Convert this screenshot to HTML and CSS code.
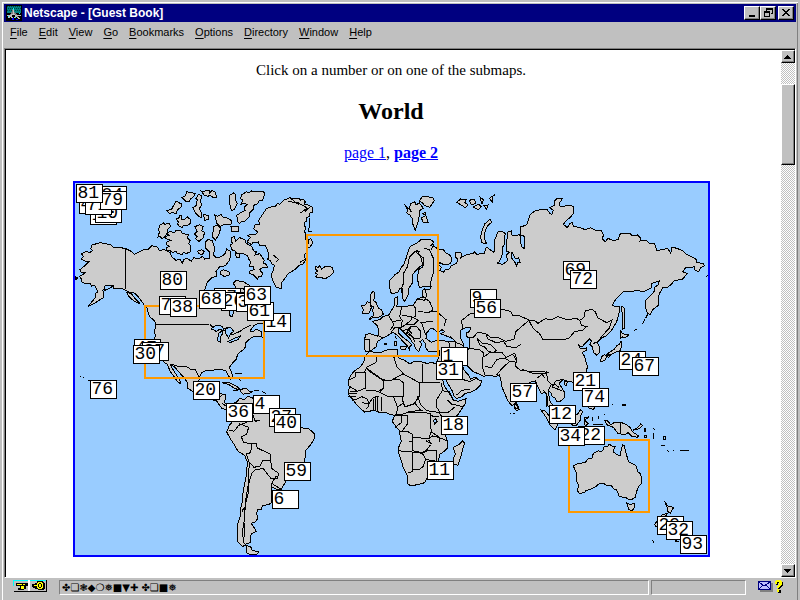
FILE: index.html
```html
<!DOCTYPE html>
<html lang="en">
<head>
  <meta charset="UTF-8">
  <title>Netscape - [Guest Book]</title>
  <link rel="stylesheet" href="styles.css">
</head>
<body>

  <header class="titlebar">
    <svg class="logo" viewBox="0 0 16 16" shape-rendering="crispEdges">
      <path fill="#000" d="M0 0h16v16H0z"/>
      <path fill="#008080" d="M1 1h14v7H1z"/>
      <path fill="none" stroke="#004040" stroke-dasharray="1 1" d="M1 1.500h14M2 3.500h13M1 5.500h14"/>
      <path fill="none" stroke="#808080" stroke-width="2" d="M7 4v3L3 12M7 7l5 5"/>
      <path fill="none" stroke="#c0c0c0" d="M7.500 4v5M1 10l3 1 3-2 4 2 4-1M2 13l3-2 2 3 3-3 4 3"/>
      <path fill="#00ffff" d="M7 3h1v2H7zM2 11h1v1H2zM13 8h1v1h-1zM9 12h1v1H9z"/>
      <path fill="#0000ff" d="M6 13h2v2H6zM10 14h2v1h-2z"/>
    </svg>
    <h1>Netscape - [Guest Book]</h1>
    <div class="window-buttons">
      <button type="button" aria-label="Minimize"><svg viewBox="0 0 12 10"><path d="M3 7h6v2H3z"/></svg></button>
      <button type="button" aria-label="Restore"><svg viewBox="0 0 12 10"><path d="M4 0h7v6H9V5h1V2H5v1H4zM2 3h6v6H2zM3 5v3h4V5z" fill-rule="evenodd"/></svg></button>
      <button type="button" aria-label="Close"><svg viewBox="0 0 12 10"><path d="M2 1h2v1h1v1h2V2h1V1h2v1H9v1H8v1H7v1h1v1h1v1h1v1H8V7H7V6H5v1H4v1H2V7h1V6h1V5h1V4H4V3H3V2H2z"/></svg></button>
    </div>
  </header>

  <nav class="menubar">
    <button type="button"><u>F</u>ile</button>
    <button type="button"><u>E</u>dit</button>
    <button type="button"><u>V</u>iew</button>
    <button type="button"><u>G</u>o</button>
    <button type="button"><u>B</u>ookmarks</button>
    <button type="button"><u>O</u>ptions</button>
    <button type="button"><u>D</u>irectory</button>
    <button type="button"><u>W</u>indow</button>
    <button type="button"><u>H</u>elp</button>
  </nav>

  <div class="viewport">
    <main class="page">
      <p>Click on a number or on one of the submaps.</p>
      <h2>World</h2>
      <p class="pages"><a href="#page1">page 1</a>, <a href="#page2"><b>page 2</b></a></p>

      <div class="map" id="map">
        <svg class="land" viewBox="0 0 1899 1116">
          <!-- North America -->
          <g transform="translate(-15 -24)">
            <path d="M165 220 150 218 130 216 120 208 104 206 92 203 80 206 66 210 62 222 68 226 60 232 48 230 34 236 40 244 34 252 44 258 60 258 48 268 40 276 30 284 34 292 46 292 40 298 28 304 34 312 36 322 48 326 62 324 64 334 74 330 80 342 84 350 76 356 78 366 66 380 54 394 72 386 90 374 100 368 102 354 98 346 108 334 118 330 130 332 130 340 146 340 158 342 168 346 180 352 190 352 200 360 208 370 216 380 222 390 232 400 234 412 240 426 254 438 258 450 254 468 256 484 250 500 254 520 260 534 270 548 280 560 292 568 300 588 312 604 322 620 332 626 328 612 318 598 308 582 302 570 312 574 326 590 340 606 352 622 354 640 376 654 400 664 420 672 440 678 448 690 456 700 468 704 472 692 464 682 468 660 452 656 438 662 432 656 436 640 424 640 412 644 394 640 386 620 390 604 394 594 410 586 422 588 440 582 456 584 468 588 474 600 482 612 488 606 484 590 478 578 486 566 500 552 502 538 520 524 528 514 526 504 536 494 552 484 576 486 574 470 558 462 550 470 540 468 552 452 564 446 580 444 592 436 600 420 590 398 580 380 560 352 530 344 510 340 496 346 500 370 488 390 492 410 486 426 478 420 480 404 468 396 450 392 430 382 412 362 404 344 412 322 426 308 440 304 438 290 448 276 466 272 478 256 482 240 480 228 470 222 464 238 450 246 436 246 430 240 434 220 426 196 414 194 406 202 408 220 420 232 418 250 404 252 398 244 386 252 372 248 364 258 350 250 340 254 338 266 330 252 318 256 306 246 300 232 282 224 268 226 262 216 246 212 236 222 220 224 210 230 194 238 182 228z"/>
            <path d="M290 175l10-6 14 4 4-8 14 2 4 8 20 4-4 10 8 8-4 10 6 4-2 20-10 4-10-2-4 6-14-4-4-6-10 4-8-6-10 0-2-10 10-2-10-8 4-8 12-2-16-6-2-6 10-4zM270 150l10-6 4 4 12-4 6 10-8 8-2 12-8 12-8 4-6-6-6 2 4-14-2-10zM318 132l10-4 2-8 4 2 0 10 8 2 10-8 10 8-2 12-10 6-10-2-2 8-10-4-6-8 4-4zM375 155l14-6 10 6-4 12 8 4-2 16-14 12-10-8 4-6-8-8 8-8zM430 155l12-4 10 8-6 22-10 14-8-8zM483 155h22v14h-20zM434 120l8 4 12-6 4 8 16 4 12 8-4 12-20-2-12 6-10-10zM480 60l10-6 8 6-2 14 6 12-8 16-10 6-2-14-4-8zM290 106l14-2 14-26 18 10-4 10-10 6-4 12-12-4-8 4zM336 68l10-6 4-12 10 2 16 4-6 10-8 6-4 8-12-2zM368 98l10-6 4-18-4-4 8-12 8 4-2 20 4 8-8 10 8 16-2 12-10-6-8-8zM394 48l8 2 8-4 10 0-2 10 8-10 10 6 4 14-10 2-10-8-6 4-12-4zM400 118l14 4 0 12-10 2zM383 228l12-4 8 6-6 8-12-2zM452 288l8-4 20 8-4 10-14 2-10-6zM490 325l8-8 20 2 20 12 0 8h-40zM497 236h12v12h-10z"/>
            <path d="M485 188l8-4 4 14 12-10 16 6 2 10 18 10 6 14 8 2-4 10 14-4 14 20-4 8 10 4 4 10-16 0-8 6 8 10-2 10-8 0-4 8-12-12-12-4 0-8 14-4-4-10-10 0 2-14-6-10-2-8-14-6-18 0-6-8-10-4-4-14 6-4-4-14zM515 60l14-10 6 4 10-6 14 2 8-2 18 4-4 14-4 10-10 2-4 8-14 6 0 12-10 10-2 12-12 12-10 0-6 8-8-8 2-6-4-10 12-8 14-8-2-10 8-8-12-4-6 4 6-12-8-6z"/>
            <path d="M457 623l18-2 24 12 14 12-18-4-18-12zM510 648l10-8 12 2 4 6 10 2-10 6-10-2-6 4zM495 596l20-1M507 605l4 14M490 645h14M552 647h14M575 650l8 2 6 6"/>
            <path class="line" d="M165 220v122M258 448h158M420 448l10 10 24 4 20-4 12 22 26-12 10-8 22-10M302 567l25 8 20-2 18 12 10-2 12 22 5 8M445 668l10-6"/>
            <path class="lake" d="M423 462l16-12 18 4 6 12-16-2-8 6-8-6zM445 476l10-8 4 6-8 12v16l-8-4zM466 460l16-2 10 12-10 4-6 16-8-14zM474 500l20-10 18-8-8 12-22 8zM102 334l8-4 18 4-14 8-10 4z"/>
            <path d="M15 305l8 4-6 5zM170 352l14 4 12 16 14 14-18-8-14-12z"/>
            <path class="line" d="M30 603h4M38 606h4M55 616h6"/>
          </g>

          <!-- Greenland, Iceland, British Isles, Svalbard -->
          <g transform="translate(555 -24)">
            <path d="M20 100l12-4 14-2 6-8 8 2 10-12 20-8 6 4 20-3 6 6 8-2 6 8-4 6 10 2 16 8-2 16-6 0-2 12-10 2 2 12-8 4 0 10 6 4-4 12 4 14-2 10 15 14-4 8-8 4 4 12-8 6-2 10 6 6-10 14-12 4-12 12-22 14-6 10-12 16 0 18-16-4-10-20-6-16 8-18 2-12-8-4-4-10-8-4 4-10-4-18-8-14-16 0-4-10-16 2-4 6-14-8 10-14-8-6 16-4 8 2 6-8-12-10 4-12 14-2-4-10z"/>
            <path class="line" d="M85 78l22 6M95 72l22 18M112 82l28 16M140 100l-18 14M150 96l-16 14M40 240l16 14M48 262l8-10M120 262l20-12M138 230v24M150 130l-4 40M146 170h10"/>
            <path d="M165 274l10 4 4-6 6 10 12-8 12 0 8 4 4 14-10 10-16 10-10-4-18-2 6-8-8-4 8-6-8-6zM330 360l8-10 6 2 0 16-4 8 8 6 8 18 8 4 6 14-12 8-20 2-10 6 6-10 8-2-4-14 2-12-10-8zM304 392l12-2 6-10 8 4 4 14-6 16-22 2 4-12zM434 88l10 18-4 8 10 6 6 10 2 16 8 20 8-24 4-22 2-14 10-6-12-16-10 6-4-10-12 6-4 14 6 10zM478 78l10-14 30 3 5 10-14 20-16-6-6-8zM488 116l8-4 2 10zM484 128l14-6 6 20-14 2z"/>
            <path d="M590 82l12-10 16 2-4 8 10 8-8 8-12-8zM628 76l14-4 6 12-14 6zM640 96l16-8 8 8-10 8zM660 66l10 8-4 14zM672 92l12-2-4 14zM688 70l18-12-10 8 0 14z"/>
            <path d="M145 195l8-4 6 12-8 12-8 4z"/>
          </g>

          <!-- Europe and Asia -->
          <g transform="translate(1065 -24)">
            <path d="M-119 352-122 318-110 305-106 300-92 290-86 276-78 268-70 245-66 230-60 215-40 205-28 195-12 194 0 193 10 200 8 208 2 212 16 216 22 222 40 224 48 234 62 242 66 256 60 266 48 270 34 266 30 262 26 268 34 278 30 286 40 292 46 284 58 282 64 272 80 264 84 252 76 246 76 234 92 232 96 242 90 250 100 244 112 238 130 236 134 230 140 238 164 235 166 220 172 218 180 224 192 232 194 222 192 200 196 190 204 170 216 168 226 176 222 190 224 206 218 216 218 232 214 246 206 262 202 264 218 268 232 258 230 240 238 232 228 228 230 200 234 170 244 168 246 180 262 182 268 178 272 186 270 200 276 216 284 222 282 200 284 184 270 180 270 155 286 152 292 146 300 120 314 108 330 104 352 104 360 116 366 118 370 106 360 98 372 92 372 80 382 70 398 70 390 82 388 92 398 96 414 90 430 94 430 116 420 128 410 136 400 148 412 158 420 146 426 142 430 154 450 158 466 164 482 158 496 166 514 166 520 178 518 192 526 200 534 190 548 196 566 194 568 178 582 174 600 174 606 182 622 180 632 190 630 198 648 196 660 206 674 206 680 226 700 224 712 220 718 228 722 236 726 216 740 220 756 226 770 238 786 246 800 254 800 262 820 266 824 272 812 278 806 290 792 284 794 274 782 278 768 276 758 290 772 296 758 312 732 318 722 330 714 336 700 336 688 356 684 372 684 392 668 404 660 420 652 414 646 396 648 374 662 362 672 350 672 338 684 330 688 318 676 322 664 326 664 338 650 346 640 350 622 346 600 350 582 348 564 366 552 380 546 392 558 394 570 394 568 412 560 440 546 464 530 482 516 488 502 502 508 516 508 534 500 540 490 532 488 516 480 508 484 498 478 492 470 500 456 516 446 510 450 520 462 522 470 518 470 526 456 532 464 544 468 562 472 574 470 588 460 600 450 612 430 622 412 618 400 614 392 620 388 626 396 640 404 652 404 668 392 678 380 680 376 670 366 664 362 652 356 650 358 676 368 690 378 708 384 722 374 720 362 704 352 690 354 670 346 652 334 656 326 640 316 618 304 620 292 628 284 640 270 652 262 664 258 684 246 692 234 678 226 660 216 636 212 612 208 600 196 606 182 600 160 604 144 596 130 590 118 578 104 566 98 560 96 570 102 584 108 592 116 600 122 612 138 606 144 614 156 618 150 632 140 642 120 652 104 656 94 666 80 670 72 664 68 650 56 630 46 612 38 594 30 578 22 560 28 540 30 526 14 530-4 530-12 520-14 506-22 494-30 500-24 508-30 518-34 530-44 520-46 510-54 500-60 490-74 476-90 460-96 462-94 474-80 488-64 500-54 510-60 514-62 524-68 512-84 496-98 480-112 472-124 480-140 488-158 500-162 516-178 528-192 530-198 518-194 478-180 476-156 484-154 468-158 452-172 440-164 436-150 434-140 424-124 420-114 404-108 394-106 370-98 365-96 382-100 394-84 396-50 390-38 372-22 366-24 352-20 344 0 342 4 334-14 334-32 338-38 310-34 284-22 276-20 270-30 274-40 284-54 300-54 326-64 340-66 360-76 380-84 366-82 340-90 340-96 352-112 356z"/>
            <path class="line" d="M-82 366l-4-26 8-18-2-26 12-20 6-30 16-16 16-2M-22 270l-6-24-14-16M-40 225l8 14 12 10 2 22M-18 220l16 4 14 30-2 40-6 20-4 22M12 206l-8 18M-38 372l22 4 6-14-6-22M-50 390l8 12-2 22-14 6M-25 362l24 18 10 24-12 8-34-2M-85 395l-6 30 8 12-4 22M-85 420l30 6 20 10-12 12-24 0-20 12M0 410l20 0 28 24-6 20M-30 442l38-2M-118 430l10 20-12 16M-115 470l10-14 16 2M-25 445l8 24 8 18M-58 455l18 0 12 14-2 20-20 0-14-16zM-75 450l20-16M-85 470l16-8 16 14M-195 492l12 0 0 34M-52 486l8 16M-125 420l12 20 30-6M-160 480l20 10M-60 455l-10 20 20 12M12 495l20 2 24 2 4 24M60 485l18 18 22 8M75 498l4 22 6 10"/>
            <path class="line" d="M100 465l-6-28 28-22 20 4 20-14 28 0 14-6 20 6 18 4 8 14 14-2 34 14-14 12-26 22-6 24-24 6-24-12-22 0-14-10-24-6-14 16-16 2M300 435l14 2 10 8 22-14 18 4 20-10 30 10 24-6 12 8 4 14 16 4-14 12-22 2-18 22-34 4-44-2-10-18-18-14-12-22M452 435l10-8 4-20 20-4 10 8 8 18 26 14 16-8-8 24-22 24-12 18-14 4M142 490l14 14 24 4 20 18-12 8-14-6-10-12-14-6-8-18M168 478l6 14 22 10 26-2 8 14 28 4 14-10M118 520l30 4 14 10-4 16-2 24 10 28M162 545l20-14 34 2 12 14 26-12 6 16-4 22 14 12 28 4 38 0 20 4M165 575l20 2 16-24 22-4 14 8M200 600l16-20 24-22 20 4M275 582l30 12 42 0M85 530l20 36M350 588l2 28 12 12 12 0 12 10M362 630l-8 20M320 610l16-12 10 12M260 560l-10-20M70 608l30 6 20 6 18-10M80 660l16-14 24-4"/>
            <path class="lake" d="M-12 490l2-16 10-12 8-2 10 8 12 0 6-4 8 6-12 6 20 8 18 8 6 8-24 0-14-4-24 2-10 4zM92 466l14-8 16 0-4 12-10 4 4 14 6 0 2 14-4 22-14 2-2-20-8-16zM246 232l10 20 10-4 4 14-8 0-2 14-6-16-10-12z"/>
            <path d="M180 133l-16 14-10 26-2 16 4 14 14 4-6-14 0-20 8-20 14-12zM575 394l6 4 4 6-2 56-6 4 0-40zM572 468l6 8 18 4-10 8-8-2-8 6 0-12zM573 497l2 14-4 16-14 4-10 6-16 2 8-8 14-8 8-12 6-2zM514 545l10-6 6 6-6 12-12 2zM543 538l-12 4 4 6zM255 683l8 8 4 12-8 4-6-8z"/>
            <path class="line" d="M655 415l-8 14M645 432l-8 16M622 462l-10 4M598 476l-8 4M828 305l8-4M240 714h4M250 714h4"/>
          </g>

          <!-- Mediterranean islands -->
          <g transform="translate(555 -24)">
            <path d="M402 498h8v14h-8zM420 516l20-2-4 10-14-2zM372 505h6v4h-6zM405 484l4 8"/>
          </g>

          <!-- Africa -->
          <g transform="translate(765 471)">
            <path d="M105 48 116 38 118 32 134 38 152 38 170 30 186 28 204 30 202 42 206 54 222 60 240 72 252 64 268 64 290 70 306 68 324 72 326 90 336 112 342 136 352 152 362 166 370 180 384 184 408 176 406 190 396 206 382 226 366 240 350 252 340 262 340 276 348 290 352 304 352 324 340 336 328 344 326 364 312 380 298 396 292 412 284 428 270 432 252 436 240 436 232 430 232 406 220 384 214 362 206 340 204 326 214 304 210 286 208 272 198 260 188 246 190 232 198 226 180 224 164 216 150 218 132 210 118 214 104 216 92 206 78 192 68 178 54 162 58 142 54 124 62 106 74 92 92 80 102 64z"/>
            <path class="line" d="M105 50l35 0-2 18-28 14-6 14-28 0M76 96l0 14-22 12M110 85l48 34 22 4 40-22-20-22-8-26 8-8M105 95v50l-20 8-26 0M60 140l20 12M108 150l38 4 16-12-2-20-50-34M162 122l46-4 14 12-2 38-50 0-20-10 12-16M220 102l48 26v40l-16 24-26 8-8-18 4-50M277 72v56h52M268 128h58M262 168l10 26 18 18 40 6 26-2M335 130l2 22-18 28 0 20 12 18M337 152l22 4 10 20M352 180l12 12 34 8M356 216l20-16M205 200l14-10 6 10 30-10 18 22M190 170l14 34-6 18 22 0 14-6 44-6M75 180l20-10 18 8 4 20-10 10M55 168h24M58 160l22 0M96 188l20 4 14-20 18-4M130 176v34M135 172v38M142 170v42M155 172l-2 44M196 226l18 2 0 20-18 14M214 228l18-2 2 24-18 24M208 275l26 0 14 8v22h-10M232 218l50 0 18 2v22l4 32-6 18M248 292l48 4 12-8 18 4 24 10M248 300v32l30 6 12-8 12-16M203 332l44 4M247 337v58l-14 4M247 336l30 4 10 18-8 22-14 10-18-2M278 340l20-10 22 0 0 34-10-2-26-4M296 300l8 12-16-10M328 220l12 16M304 276l22 14 4 16M66 182l8-4M300 222l10 8 18-2"/>
            <path class="lake" d="M310 242l8-6 4 8-8 8z"/>
            <path d="M398 302l6 8-4 10-6 26-10 30-12-4-2-16 6-14-6-20 16-8z"/>
          </g>

          <!-- South America -->
          <g transform="translate(-15 531)">
            <path d="M468 150 486 132 500 126 510 114 522 120 534 108 552 116 568 124 584 140 604 160 626 178 650 190 676 200 700 204 716 206 732 220 732 238 722 254 708 270 706 290 702 310 694 328 672 340 652 356 642 374 632 390 620 388 604 380 606 396 604 412 606 426 596 434 578 436 574 448 562 450 560 462 564 474 556 486 544 490 552 502 558 514 544 522 540 534 540 548 528 552 518 560 504 546 502 520 502 494 510 470 510 452 516 430 518 404 524 370 530 340 532 306 524 286 504 274 494 256 482 238 470 216 478 196 490 182 482 160z"/>
            <path class="line" d="M528 280l10 30-4 56 2 30-10 36-2 40-6 40 2 34 8 10M528 282l14-4 4-30M478 210l14 4 14-18 22-8 6-10-22-8-8-10M506 190l30 12-6 20-16 8 6 16 22 6 16-2 4 14 38 18 2 22M542 310l10 12 18-4 8-16 24 0 4 24 20 14-4 14-20 0-8-10-14-18-22 2-12 10-12 40-8 50-4 60 0 44M605 370l28 18M605 370l-2 20M605 370l14-22M570 180l-14 4-8-20M455 128l12 10"/>
            <path d="M528 556l14 4 4 10 20 6-4 6-20 2-12-6zM516 456l4-10 6 8"/>
          </g>

          <!-- Australia and the islands around it -->
          <g transform="translate(1305 501)">
            <path d="M190 348l14-8 22-2 8-12 12-2 4-14 16-8 4 4 8-4 4-12 12-2 4-6 8 6 10 0-4 8-2 10 12 8 8 4 4-18 4-16 4 2 4 16 4 14 6 20 14 6 8 6 6 18 8 6 2 12 0 16-8 10-6 14-4 18-10 6-10 0-10-6-18-2-8-20-10-4-6-10-14 0-10-6-14 2-8 8-16 8-14 4-4 6-16 2-6-8 4-14-8-20 2-18zM350 458l10 6 12-4 2 12-8 10-10-4zM284 212l8 0 10 12 14-8 14 0 20 8 12 10 6 12 18 12-4 4-18-4-10-10-10 6-20-4-14-18-20-8z"/>
            <path d="M368 240l16-8 8-10 6 4-10 10-16 4zM93 180l12 2 14 18 24 24-8 16-16-16-12-24zM188 190l14 4 10-16 6 8-8 16 0 10-12 16-14-4-8-10zM222 204l16-4-14 10 10 10-8 8-4-10zM230 150l10 0 8 12 8 8-6 8-14-4zM163 95l10-2-4 14-6-4zM463 452l6 10 4 6 18 4-10 18-8-6-2-12zM458 493l14-2-20 26-14 14-4-8zM495 570l8 4-8 2zM428 570l4 8M12 160l8 4 4 12-8-2z"/>
            <path class="line" d="M330 218v34M402 236h4v8h-4zM402 256h6v6h-6zM430 236l6 4M430 250v18M460 258h6v10h-6zM452 286h12M470 302l8 2M488 302h4M510 302h28M248 200v12M264 198v10M282 192h4M305 162h4M338 162h8v4h-8zM248 222h30M110 130v40M100 120l8 12M128 108l10-16 22-4M125 110l30 12"/>
          </g>
        </svg>

        <a class="submap north-america" href="#north-america" aria-label="North America"></a>
        <a class="submap europe" href="#europe" aria-label="Europe"></a>
        <a class="submap australia" href="#australia" aria-label="Australia"></a>
      </div>
    </main>

    <div class="scrollbar">
      <button type="button" aria-label="Scroll up"><svg viewBox="0 0 8 4"><path d="M3 0h1v1h1v1h1v1h1v1H0V3h1V2h1V1h1z"/></svg></button>
      <div class="thumb"></div>
      <button type="button" class="down" aria-label="Scroll down"><svg viewBox="0 0 8 4"><path d="M0 0h7v1H6v1H5v1H4v1H3V3H2V2H1V1H0z"/></svg></button>
    </div>
  </div>

  <footer class="statusbar">
    <svg class="security" viewBox="0 0 34 12" shape-rendering="crispEdges">
      <path fill="#000" d="M1 11h32V0h1v12H1z"/>
      <path fill="#00ffff" d="M0 0h15v1H0zM17 0h16v1H17zM0 1h1v5H0z"/>
      <path fill="#000" d="M3 3h12v3h-2v3h-2v1H5V8h2V6H3z"/>
      <path fill="#ffff00" d="M4 4h5v1H4zM10 4h2v1h-2zM8 6h3v3H8z"/>
      <path fill="#fff" d="M15 0h2v11h-2z"/>
      <path fill="#000" d="M24 1h6v1h1v1h1v6h-1v1h-6V9h-3V8h-2V7h-1V4h3V3h2z"/>
      <path fill="#ffff00" d="M25 2h4v1h1v5h-1v1h-4V8h-1V6h-3V5h3V3h1z"/>
      <path fill="#000" d="M25 4h1v3h-1zM28 4h1v3h-1zM26 3h2v1h-2zM26 7h2v1h-2z"/>
    </svg>
    <div class="field message">✤❏❃◆❍❅■▼✚ ✤❏■❅</div>
    <div class="field progress"></div>
    <svg class="mail" viewBox="0 0 26 13" shape-rendering="crispEdges">
      <path fill="#808080" d="M2 3h13v9H2z"/>
      <path fill="#c0c0ff" stroke="#000080" d="M.5 1.500h12v8H.5z"/>
      <path fill="none" stroke="#000080" d="M1 2l5 4 6-4M1 9l4-4M12 9L8 5"/>
      <path fill="#000" d="M18 1h6v1h1v4h-1v1h-1v1h-1v1h-2V7h2V5h1V3h-3v2h-2zM20 10h3v3h-3z"/>
      <path fill="#ffff00" d="M17 1h1V0h5v1h1v4h-1v1h-1v1h-1v1h-2V6h1V5h1V2h-2v2h-2zM19 9h2v3h-2z"/>
    </svg>
  </footer>

  <script src="pins.js"></script>
</body>
</html>
```
FILE: styles.css
```css
* {
  margin: 0;
  padding: 0;
  box-sizing: border-box;
}

body {
  display: flex;
  flex-direction: column;
  height: 100vh;
  padding: 2px;
  overflow: hidden;
  background-color: #c0c0c0;
  border: 2px solid #c0c0c0;
  border-bottom: 0;
  box-shadow: inset 1px 1px #ffffff, inset -1px 0 #808080;
  color: black;
  font-family: "Liberation Sans", Arial, sans-serif;
  font-size: 11px;
}

button {
  background: none;
  border: none;
  color: black;
  font: inherit;
}

.titlebar {
  display: flex;
  align-items: center;
  height: 18px;
  padding: 0 2px;
  background-color: #000080;
  color: white;
}

.titlebar h1 {
  flex: 1;
  margin-left: 2px;
  font-size: 12px;
  line-height: 18px;
}

.logo {
  width: 16px;
  height: 16px;
}

.window-buttons {
  display: flex;
}

.window-buttons button,
.scrollbar button,
.thumb {
  background-color: #c0c0c0;
  border: 1px solid;
  border-color: #ffffff #000000 #000000 #ffffff;
  box-shadow: inset -1px -1px #808080;
}

.window-buttons button {
  width: 16px;
  height: 14px;
}

.window-buttons button:last-child {
  margin-left: 2px;
}

.window-buttons svg {
  display: block;
  width: 12px;
  height: 10px;
  margin-left: 1px;
  shape-rendering: crispEdges;
}

.menubar {
  display: flex;
  gap: 11px;
  height: 26px;
  padding: 3px 6px;
}

.menubar button {
  height: 14px;
  line-height: 14px;
}

.menubar u {
  text-underline-offset: 2px;
}

.viewport {
  display: flex;
  flex: 1;
  min-height: 0;
  background-color: white;
  border: 1px solid;
  border-color: #808080 #ffffff #ffffff #808080;
  box-shadow: inset 1px 1px #000000;
}

.page {
  display: flex;
  flex: 1;
  flex-direction: column;
  align-items: center;
  gap: 18px;
  padding: 12px 4px 0 0;
  overflow: hidden;
  font-family: "Liberation Serif", "Times New Roman", serif;
  font-size: 15px;
  line-height: 18px;
}

.page h2 {
  font-size: 24px;
  line-height: 28px;
}

.page .pages {
  font-size: 16px;
  line-height: 20px;
}

.page p a {
  color: #0000ff;
}

.map {
  position: relative;
  flex: none;
  background-color: #99ccff;
  border: 2px solid #0000ff;
}

.land {
  display: block;
  width: 633px;
  height: 372px;
  fill: #cccccc;
  stroke: black;
  stroke-width: 3;
  shape-rendering: crispEdges;
}

.land .line {
  fill: none;
}

.land .lake {
  fill: #99ccff;
}

.submap {
  position: absolute;
  border: 2px solid #ff9900;
}

.north-america {
  left: 69px;
  top: 122px;
  width: 121px;
  height: 74px;
}

.europe {
  left: 231px;
  top: 51px;
  width: 133px;
  height: 123px;
}

.australia {
  left: 493px;
  top: 256px;
  width: 82px;
  height: 74px;
}

.pin {
  position: absolute;
  width: 27px;
  height: 19px;
  padding-left: 1px;
  background-color: white;
  border: 1px solid black;
  color: black;
  font-family: "Liberation Mono", "Courier New", monospace;
  font-size: 18px;
  line-height: 17px;
  text-decoration: none;
  overflow: hidden;
}

.scrollbar {
  display: flex;
  flex-direction: column;
  width: 14px;
  margin-top: 1px;
  background: repeating-conic-gradient(#c0c0c0 0 25%, #ffffff 0 50%) 0 0 / 2px 2px;
}

.scrollbar button {
  display: flex;
  align-items: center;
  justify-content: center;
  height: 13px;
}

.scrollbar svg {
  width: 8px;
  height: 4px;
  shape-rendering: crispEdges;
}

.thumb {
  height: 81px;
  margin-top: 21px;
}

.scrollbar .down {
  margin-top: auto;
}

.statusbar {
  display: flex;
  align-items: flex-start;
  height: 20px;
  padding: 2px 12px 0 9px;
}

.security {
  width: 34px;
  height: 12px;
  margin-right: 12px;
}

.field {
  height: 15px;
  border: 1px solid;
  border-color: #808080 #ffffff #ffffff #808080;
}

.message {
  flex: 1;
  padding-left: 2px;
  font-family: "DejaVu Sans", sans-serif;
  font-size: 10px;
  line-height: 13px;
}

.progress {
  width: 95px;
  margin: 0 12px 0 2px;
}

.mail {
  width: 26px;
  height: 13px;
}
```
FILE: pins.js
```javascript
// number, left, top - later pins lie over earlier ones
const pins = [
  ["18", 15, 23], ["10", 20, 21], ["47", 4, 12], ["71", 10, 13], ["84", 25, 3], ["79", 25, 8], ["81", 1, 1],
  ["80", 85, 88], ["78", 84, 113], ["38", 95, 115],
  ["77", 139, 105], ["26", 146, 109], ["33", 161, 110], ["68", 124, 107],
  ["14", 189, 130], ["61", 172, 119], ["63", 169, 103],
  ["47", 59, 156], ["37", 67, 159], ["30", 58, 162],
  ["76", 15, 197], ["20", 118, 198], ["36", 151, 220], ["4", 178, 212],
  ["27", 194, 225], ["40", 199, 231], ["59", 209, 279], ["6", 197, 307],
  ["69", 488, 78], ["72", 495, 87], ["9", 395, 106], ["56", 399, 116],
  ["1", 366, 164], ["31", 361, 178], ["24", 544, 168], ["67", 557, 174],
  ["57", 435, 200], ["18", 366, 233], ["11", 352, 278],
  ["21", 498, 189], ["74", 507, 205], ["12", 474, 222], ["22", 503, 243], ["34", 483, 244],
  ["29", 582, 333], ["32", 591, 338], ["93", 605, 352]
];

const map = document.getElementById("map");

pins.forEach(([number, left, top]) => {
  const pin = document.createElement("a");
  pin.className = "pin";
  pin.href = "#entry" + number;
  pin.textContent = number;
  pin.style.left = left + "px";
  pin.style.top = top + "px";
  map.appendChild(pin);
});
```
